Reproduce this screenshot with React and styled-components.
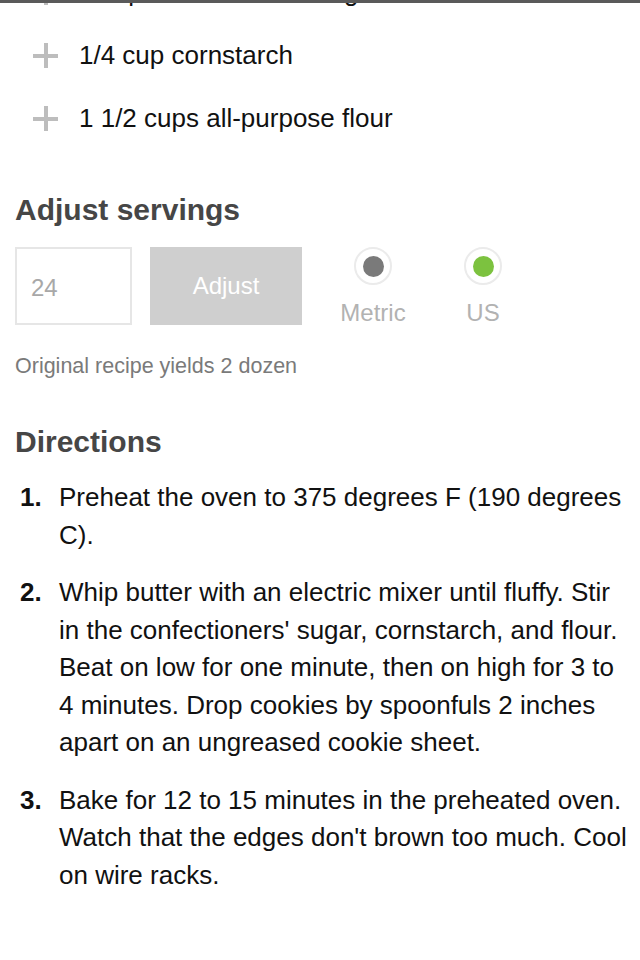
import styled, { createGlobalStyle } from "styled-components";

const GlobalStyle = createGlobalStyle`
  html, body {
    margin: 0;
    padding: 0;
    background: #fff;
  }
  body {
    font-family: "Liberation Sans", Arial, Helvetica, sans-serif;
    color: #111;
  }
`;

const ingredients = [
  "1 cup confectioners' sugar",
  "1/4 cup cornstarch",
  "1 1/2 cups all-purpose flour",
];

const steps = [
  "Preheat the oven to 375 degrees F (190 degrees C).",
  "Whip butter with an electric mixer until fluffy. Stir in the confectioners' sugar, cornstarch, and flour. Beat on low for one minute, then on high for 3 to 4 minutes. Drop cookies by spoonfuls 2 inches apart on an ungreased cookie sheet.",
  "Bake for 12 to 15 minutes in the preheated oven. Watch that the edges don't brown too much. Cool on wire racks.",
];

function App() {
  return (
    <Page>
      <GlobalStyle />
      <TopEdge />
      <IngredientList>
        {ingredients.map((item) => (
          <Ingredient key={item}>
            <Plus />
            <span>{item}</span>
          </Ingredient>
        ))}
      </IngredientList>

      <Section>
        <Heading>Adjust servings</Heading>
        <Controls>
          <ServingsInput defaultValue="24" />
          <AdjustButton>Adjust</AdjustButton>
          <Units>
            <Unit>
              <Radio>
                <Dot color="#7a7a7a" />
              </Radio>
              <UnitLabel>Metric</UnitLabel>
            </Unit>
            <Unit>
              <Radio>
                <Dot color="#7cc23f" />
              </Radio>
              <UnitLabel>US</UnitLabel>
            </Unit>
          </Units>
        </Controls>
        <Yield>Original recipe yields 2 dozen</Yield>
      </Section>

      <Section $top={45}>
        <Heading>Directions</Heading>
        <Steps>
          {steps.map((text, i) => (
            <Step key={i}>
              <StepNum>{i + 1}.</StepNum>
              <StepText>{text}</StepText>
            </Step>
          ))}
        </Steps>
      </Section>
    </Page>
  );
}

export default App;

const Page = styled.div`
  width: 640px;
  min-height: 960px;
  overflow: hidden;
  background: #fff;
`;

const TopEdge = styled.div`
  position: relative;
  z-index: 2;
  height: 3px;
  background: #5a5a5a;
`;

const IngredientList = styled.ul`
  list-style: none;
  margin: -42px 0 0;
  padding: 0 0 0 33px;
`;

const Ingredient = styled.li`
  display: flex;
  align-items: center;
  gap: 21px;
  height: 63px;
  font-size: 26px;
  color: #111;
`;

const Plus = styled.i`
  position: relative;
  flex: none;
  width: 25px;
  height: 25px;

  &::before,
  &::after {
    content: "";
    position: absolute;
    background: #bdbdbd;
  }
  &::before {
    left: 0;
    right: 0;
    top: 10.5px;
    height: 4px;
  }
  &::after {
    top: 0;
    bottom: 0;
    left: 10.5px;
    width: 4px;
  }
`;

const Section = styled.section`
  margin-top: ${(p) => p.$top ?? 42}px;
  padding: 0 8px 0 15px;
`;

const Heading = styled.h2`
  margin: 0;
  font-size: 30px;
  line-height: 36px;
  font-weight: 700;
  color: #464646;
`;

const Controls = styled.div`
  display: flex;
  align-items: flex-start;
  height: 78px;
  margin-top: 19px;
`;

const ServingsInput = styled.input`
  box-sizing: border-box;
  width: 117px;
  height: 78px;
  border: 2px solid #e6e6e6;
  padding: 4px 14px 0;
  font-family: inherit;
  font-size: 24px;
  color: #a8a8a8;
  background: #fff;
  outline: none;
`;

const AdjustButton = styled.button`
  width: 152px;
  height: 78px;
  margin-left: 18px;
  border: 0;
  background: #cfcfcf;
  color: #fff;
  font-family: inherit;
  font-size: 24px;
  padding: 0;
`;

const Units = styled.div`
  display: flex;
  gap: 56px;
  margin-left: 36px;
`;

const Unit = styled.label`
  display: flex;
  flex-direction: column;
  align-items: center;
  gap: 16px;
  min-width: 70px;

  & + & {
    min-width: 36px;
  }
`;

const Radio = styled.span`
  box-sizing: border-box;
  display: flex;
  align-items: center;
  justify-content: center;
  width: 38px;
  height: 38px;
  border-radius: 50%;
  border: 2px solid #ebebeb;
  background: #fff;
`;

const Dot = styled.span`
  width: 21px;
  height: 21px;
  border-radius: 50%;
  background: ${(p) => p.color};
`;

const UnitLabel = styled.span`
  font-size: 24px;
  line-height: 24px;
  color: #b2b2b2;
`;

const Yield = styled.p`
  margin: 28px 0 0;
  font-size: 21.5px;
  line-height: 26px;
  color: #7a7a7a;
`;

const Steps = styled.ol`
  list-style: none;
  margin: 19px 0 0;
  padding: 0;
  display: flex;
  flex-direction: column;
  gap: 20px;
`;

const Step = styled.li`
  display: flex;
  font-size: 26px;
  line-height: 37.5px;
  color: #111;
`;

const StepNum = styled.span`
  flex: none;
  width: 44px;
  padding-left: 5px;
  box-sizing: border-box;
  font-weight: 700;
`;

const StepText = styled.span`
  flex: 1;
`;
